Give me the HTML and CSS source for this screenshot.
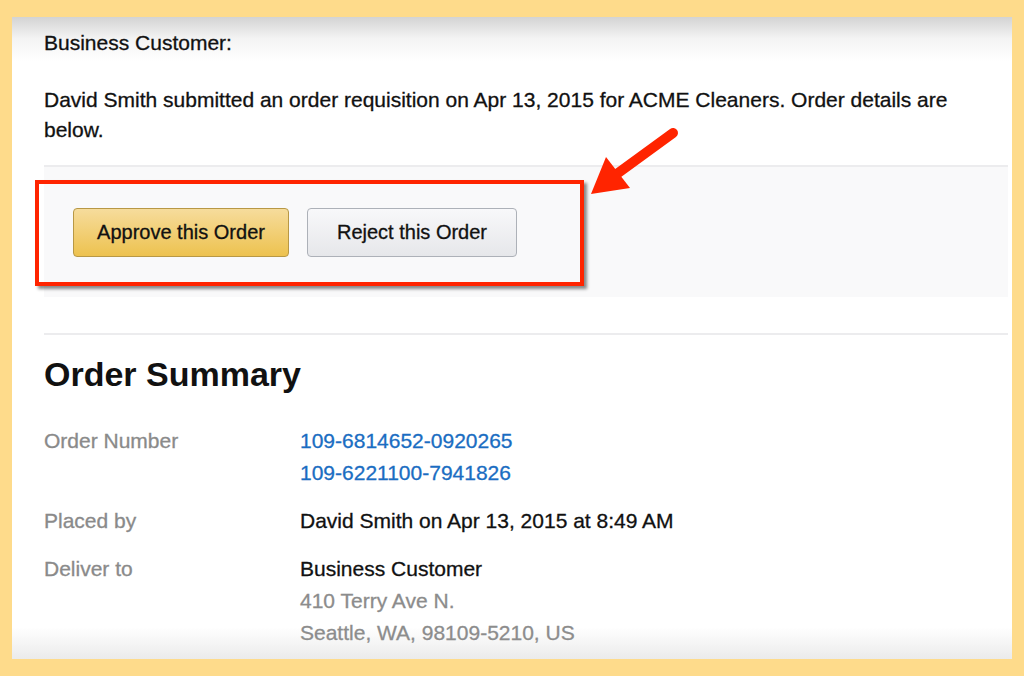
FILE: index.html
```html
<!DOCTYPE html>
<html lang="en">
<head>
    <meta charset="UTF-8">
    <meta name="viewport" content="width=device-width, initial-scale=1.0">
    <title>Order Requisition</title>
    <link rel="stylesheet" href="styles.css">
</head>
<body>
    <!-- white mail panel on the yellow frame -->
    <div class="panel">
        <p class="greeting">Business Customer:</p>
        <p class="intro">David Smith submitted an order requisition on Apr 13, 2015 for ACME Cleaners. Order details are below.</p>

        <!-- approve / reject buttons -->
        <div class="actions">
            <button class="btn btn-approve">Approve this Order</button>
            <button class="btn btn-reject">Reject this Order</button>
            <div class="highlight"></div>
        </div>

        <!-- red arrow pointing at the buttons -->
        <svg class="arrow" width="110" height="90" viewBox="0 0 110 90">
            <line x1="93" y1="13" x2="34" y2="56" stroke="#ff2400" stroke-width="10" stroke-linecap="round"/>
            <polygon points="11,74 26,37 50,68" fill="#ff2400"/>
        </svg>

        <div class="summary">
            <h2>Order Summary</h2>

            <div class="row">
                <div class="label">Order Number</div>
                <div class="value">
                    <a href="#">109-6814652-0920265</a><br>
                    <a href="#">109-6221100-7941826</a>
                </div>
            </div>

            <div class="row">
                <div class="label">Placed by</div>
                <div class="value">David Smith on Apr 13, 2015 at 8:49 AM</div>
            </div>

            <div class="row">
                <div class="label">Deliver to</div>
                <div class="value">
                    Business Customer<br>
                    <span class="muted">410 Terry Ave N.</span><br>
                    <span class="muted">Seattle, WA, 98109-5210, US</span>
                </div>
            </div>
        </div>
    </div>
</body>
</html>
```

FILE: styles.css
```css
body
{
    margin: 0px;
    padding: 17px 12px;
    background-color: #fedb8b;   /* yellow frame */
    font-family: "Liberation Sans", Arial, Helvetica, sans-serif;
    color: #111;
    -webkit-text-stroke: 0.3px currentColor;   /* the video frame renders text a bit heavier */
}

/* the mail panel */
.panel
{
    position: relative;
    height: 642px;
    box-sizing: border-box;
    padding: 0px 4px 0px 32px;
    overflow: hidden;
    background: linear-gradient(to bottom, #d3d3d3 0px, #f4f4f4 22px, #ffffff 45px, #ffffff 610px, #ebebeb 642px);
}

.greeting
{
    margin: 11px 0px 0px 0px;
    font-size: 21px;
    line-height: 30px;
}

.intro
{
    margin: 27px 0px 0px 0px;
    max-width: 925px;
    font-size: 21px;
    line-height: 30px;
}

/* grey band with the buttons */
.actions
{
    position: relative;
    margin-top: 20px;
    border-top: 2px solid #ececee;
    background-color: #f9f9fa;
    padding: 41px 0px 40px 29px;
    display: flex;
    gap: 18px;
}

.btn
{
    height: 49px;
    border-radius: 4px;
    font-family: inherit;
    font-size: 20px;
    color: #111;
    padding: 0px;
    -webkit-text-stroke: 0.3px #111;
}

.btn-approve
{
    width: 216px;
    border: 1px solid #b89845;
    background: linear-gradient(to bottom, #f6dc9c, #edc24f);
}

.btn-reject
{
    width: 210px;
    border: 1px solid #adb1b8;
    background: linear-gradient(to bottom, #f8f8fa, #e6e7ea);
}

/* red annotation box */
.highlight
{
    position: absolute;
    left: -9px;
    top: 13px;
    width: 549px;
    height: 106px;
    box-sizing: border-box;
    border: 4px solid #ff2400;
    box-shadow: 3px 3px 3px rgba(0, 0, 0, 0.45);
}

.arrow
{
    position: absolute;
    left: 568px;
    top: 103px;
}

/* order summary */
.summary
{
    margin-top: 36px;
    border-top: 2px solid #ececee;
}

.summary h2
{
    margin: 19px 0px 31px 0px;
    font-size: 34px;
    line-height: 40px;
    font-weight: bold;
    -webkit-text-stroke: 0px;
}

.row
{
    display: flex;
    margin-bottom: 16px;
    font-size: 21px;
    line-height: 32px;
}

.label
{
    width: 256px;
    color: #8a8a8a;
}

.value a
{
    color: #1a6dc2;
    text-decoration: none;
}

.muted
{
    color: #8c8c8c;
}
```
